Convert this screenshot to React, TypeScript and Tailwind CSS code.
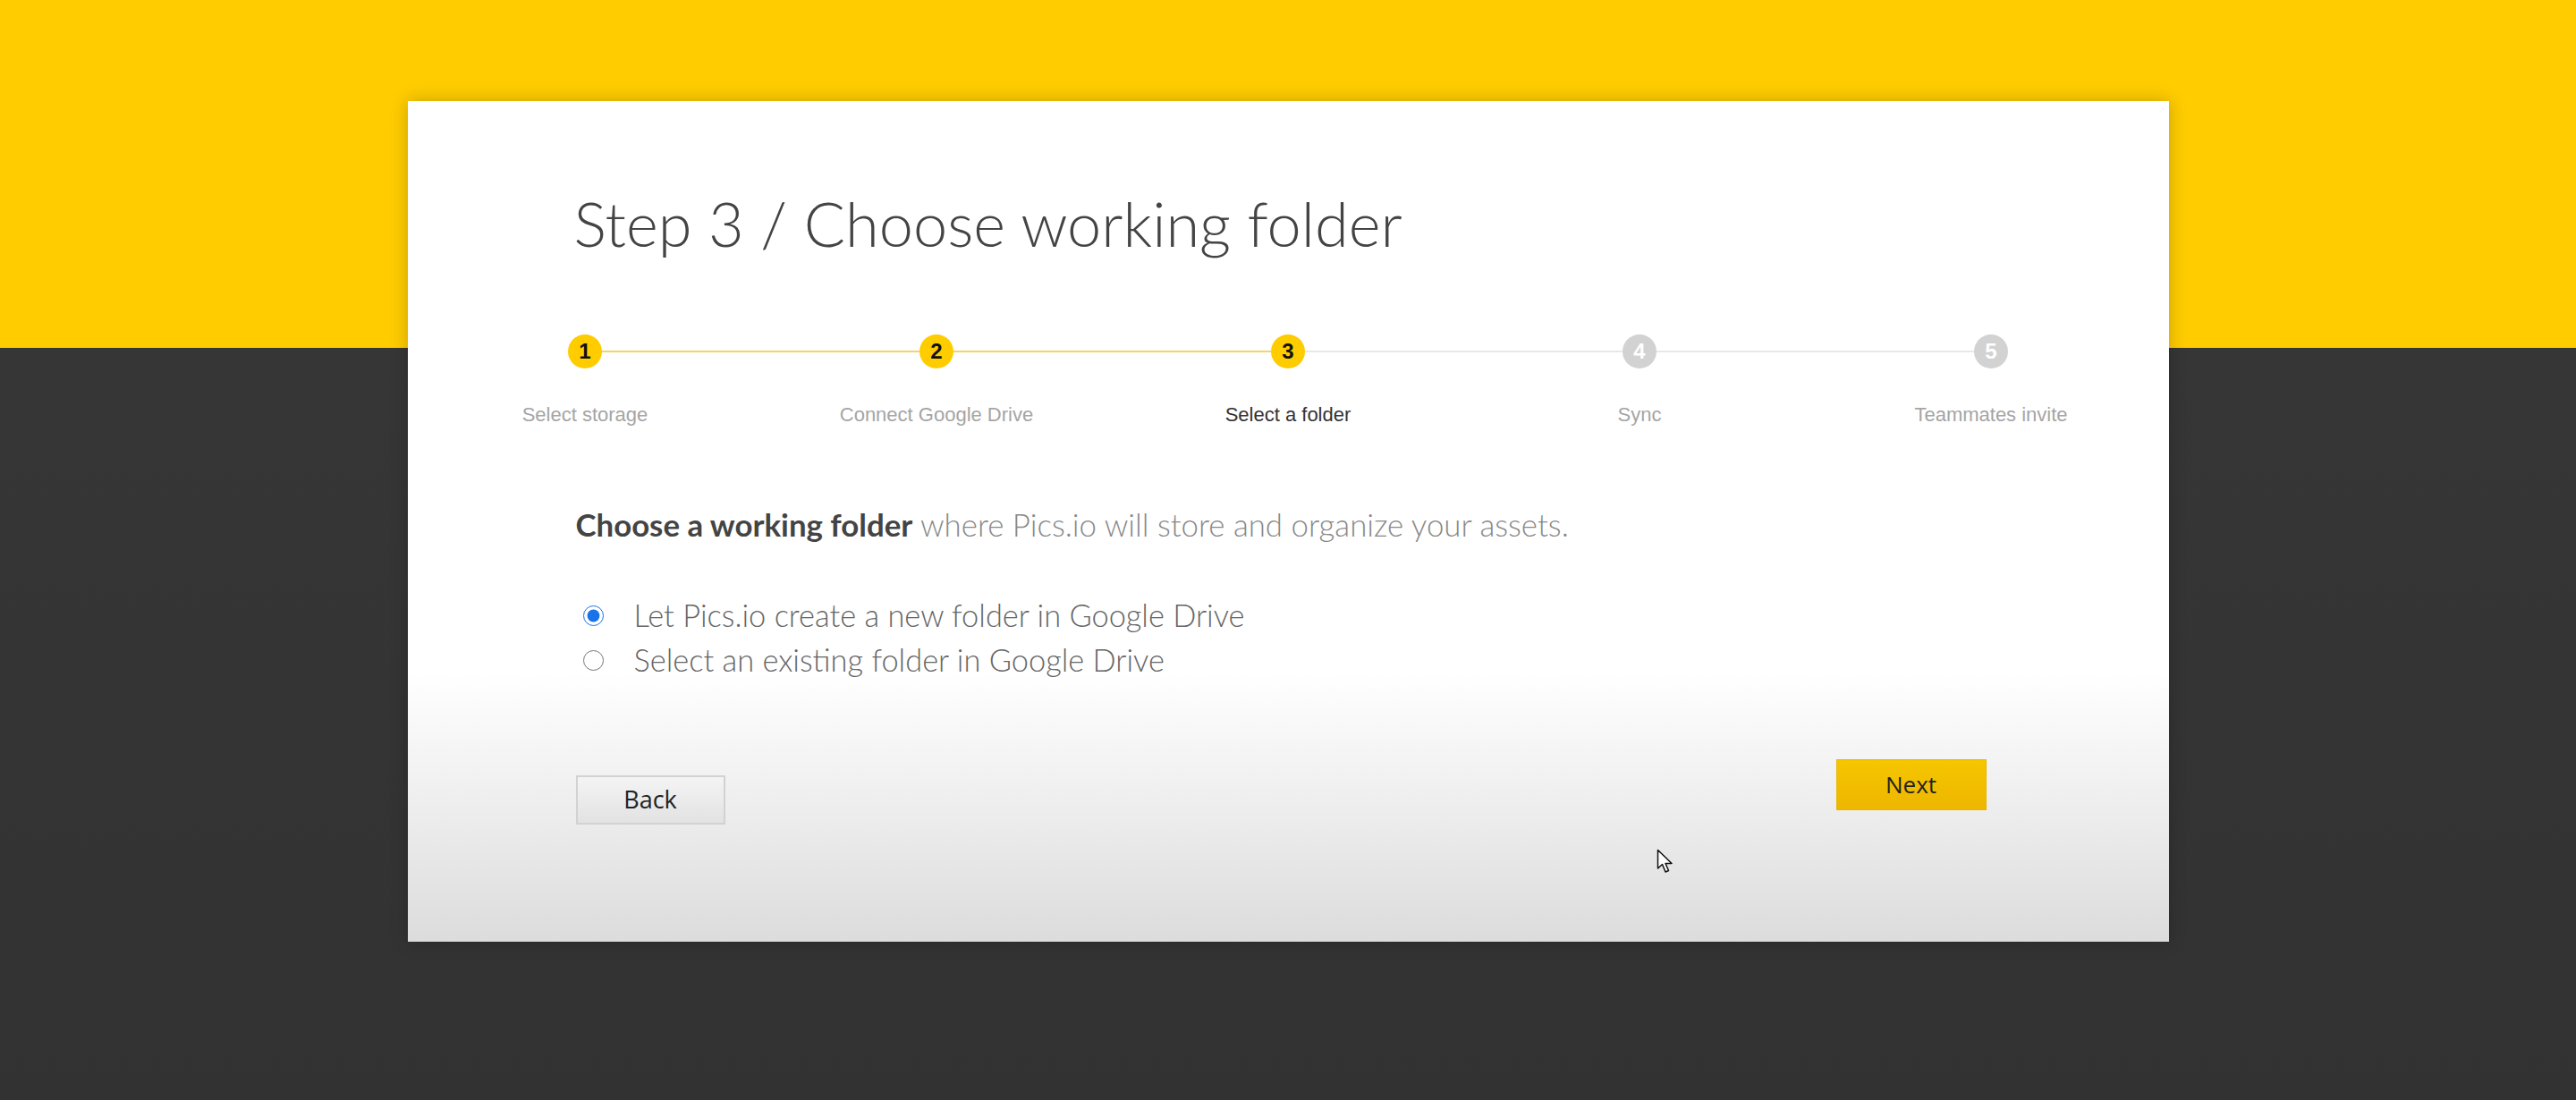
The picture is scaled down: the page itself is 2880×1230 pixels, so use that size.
import { useState } from "react";

const steps = [
  { n: 1, label: "Select storage", done: true },
  { n: 2, label: "Connect Google Drive", done: true },
  { n: 3, label: "Select a folder", done: true, current: true },
  { n: 4, label: "Sync", done: false },
  { n: 5, label: "Teammates invite", done: false },
];

function Step({ step, index }: { step: (typeof steps)[number]; index: number }) {
  // line on the left belongs to the previous segment, line on the right to the next
  const leftOn = index > 0 && steps[index].done;
  const rightOn = index < steps.length - 1 && steps[index + 1].done;
  return (
    <div className="flex flex-col items-center">
      <div className="flex w-full items-center h-[38px]">
        <div className={`flex-1 h-[2px] ${index === 0 ? "" : leftOn ? "bg-[#f3d46a]" : "bg-[#e8e8e8]"}`} />
        <div
          className={`w-[38px] h-[38px] rounded-full flex items-center justify-center text-[24px] font-bold font-['Liberation_Sans',sans-serif] ${
            step.done ? "bg-[#ffcc00] text-[#111]" : "bg-[#d2d2d2] text-white"
          }`}
        >
          {step.n}
        </div>
        <div className={`flex-1 h-[2px] ${index === steps.length - 1 ? "" : rightOn ? "bg-[#f3d46a]" : "bg-[#e8e8e8]"}`} />
      </div>
      <div
        className={`mt-[40px] text-[22px] leading-[24px] font-['Liberation_Sans',sans-serif] ${
          step.current ? "text-[#333]" : "text-[#a5a5a5]"
        }`}
      >
        {step.label}
      </div>
    </div>
  );
}

export default function App() {
  const [choice, setChoice] = useState("new");

  return (
    <main className="w-full h-[1230px] overflow-hidden bg-[linear-gradient(to_bottom,#ffcc00_0px,#ffcc00_389px,#363636_389px,#323232_1230px)] pt-[113px] font-['Lato',sans-serif]">
      <div className="relative w-[1969px] h-[940px] mx-auto flex flex-col bg-[linear-gradient(to_bottom,#ffffff_0%,#ffffff_68%,#dcdcdc_100%)] shadow-[0_0_18px_rgba(0,0,0,0.22)]">
        <h1 className="pl-[186px] pt-[103px] text-[68.5px] leading-[68px] font-light text-[#444]">
          Step 3 / Choose working folder
        </h1>

        <div className="grid grid-cols-5 mt-[90px] px-[2px]">
          {steps.map((s, i) => (
            <Step key={s.n} step={s} index={i} />
          ))}
        </div>

        <div className="pl-[188px] pr-[204px] flex flex-col">
          <p className="mt-[91px] text-[34.8px] leading-[40px] text-[#888] font-light">
            <span className="font-bold text-[#444]">Choose a working folder</span> where Pics.io will store and
            organize your assets.
          </p>

          <div className="mt-[56px] flex flex-col">
            <label className="h-[50px] flex items-center gap-[34px] text-[34.4px] font-light text-[#666] cursor-pointer">
              <input
                type="radio"
                name="folder"
                checked={choice === "new"}
                onChange={() => setChoice("new")}
                className="w-[23px] h-[23px] m-0 ml-[8px] accent-[#1a73e8]"
              />
              Let Pics.io create a new folder in Google Drive
            </label>
            <label className="h-[50px] flex items-center gap-[34px] text-[34.4px] font-light text-[#666] cursor-pointer">
              <input
                type="radio"
                name="folder"
                checked={choice === "existing"}
                onChange={() => setChoice("existing")}
                className="w-[23px] h-[23px] m-0 ml-[8px] accent-[#1a73e8]"
              />
              Select an existing folder in Google Drive
            </label>
          </div>

          <div className="mt-[86px] flex justify-between items-start">
            <button className="mt-[18px] w-[167px] h-[55px] border-2 border-[#d2d2d2] bg-[linear-gradient(to_bottom,#f4f4f4,#e2e2e2)] text-[27px] text-[#222] font-['Open_Sans',sans-serif]">
              Back
            </button>
            <button className="w-[168px] h-[57px] border border-[#e6b800] bg-[linear-gradient(to_bottom,#f6c600,#eeb600)] text-[26px] text-[#222] font-['Open_Sans',sans-serif]">
              Next
            </button>
          </div>
        </div>

        {/* mouse pointer captured in the screenshot */}
        <svg
          className="absolute left-[1396px] top-[836px]"
          width="20"
          height="30"
          viewBox="0 0 20 30"
        >
          <path
            d="M1.5 1.5 L1.5 22 L6.5 17.5 L10 26 L13.5 24.5 L10 16.5 L17 16.5 Z"
            fill="#fff"
            stroke="#111"
            strokeWidth="1.5"
            strokeLinejoin="round"
          />
        </svg>
      </div>
    </main>
  );
}
